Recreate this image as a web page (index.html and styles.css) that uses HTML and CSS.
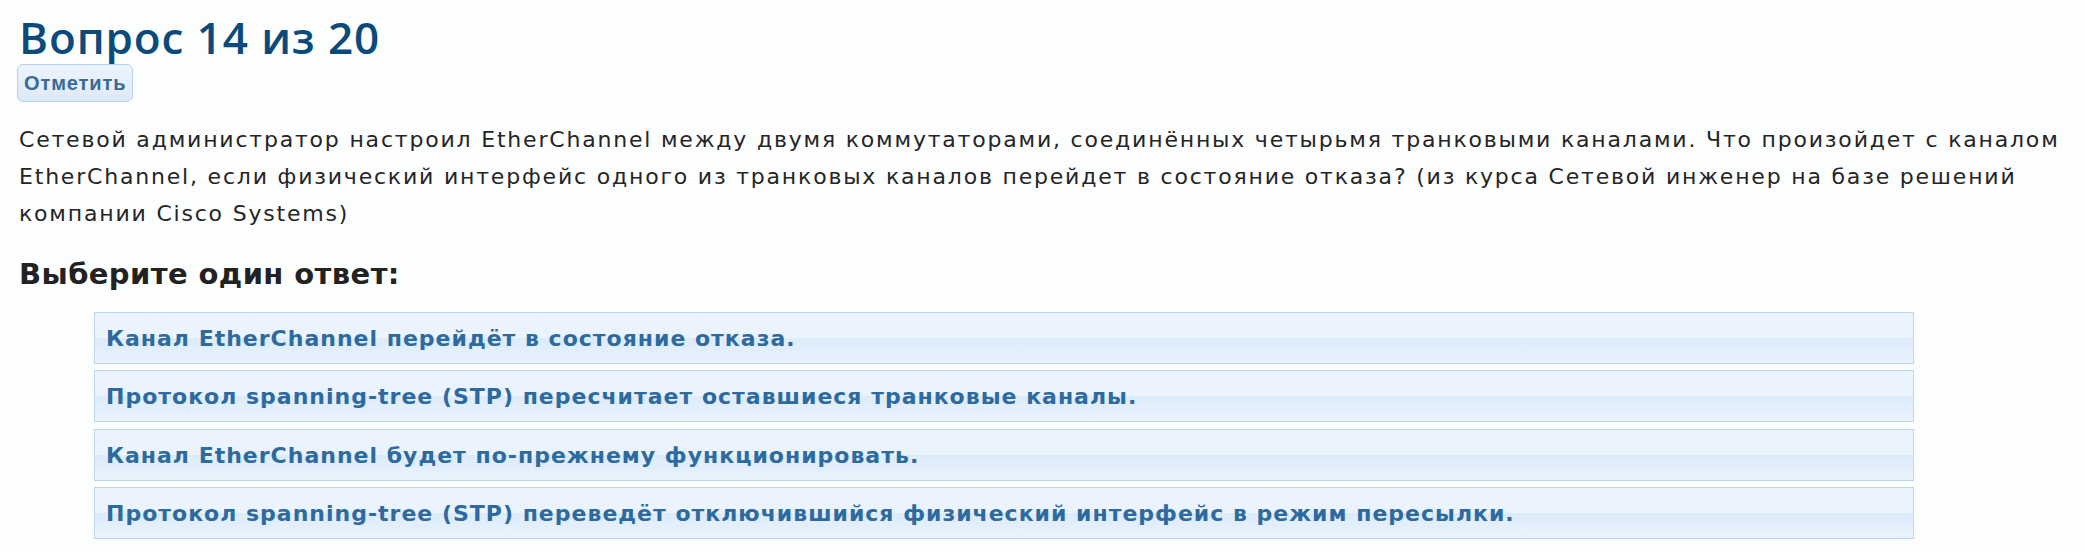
FILE: index.html
```html
<!DOCTYPE html>
<html lang="ru">
<head>
    <meta charset="UTF-8">
    <meta name="viewport" content="width=device-width, initial-scale=1.0">
    <title>Вопрос 14 из 20</title>
    <link rel="stylesheet" href="styles.css">
</head>
<body>
    <div class="question">
        <h1 class="q-title">Вопрос 14 из 20</h1>
        <button class="flag-btn" type="button">Отметить</button>
        <p class="q-text">Сетевой администратор настроил EtherChannel между двумя коммутаторами, соединённых четырьмя транковыми каналами. Что произойдет с каналом EtherChannel, если физический интерфейс одного из транковых каналов перейдет в состояние отказа? (из курса Сетевой инженер на базе решений компании Cisco Systems)</p>
        <h2 class="q-prompt">Выберите один ответ:</h2>
        <ul class="answers">
            <li class="answer">Канал EtherChannel перейдёт в состояние отказа.</li>
            <li class="answer">Протокол spanning-tree (STP) пересчитает оставшиеся транковые каналы.</li>
            <li class="answer">Канал EtherChannel будет по-прежнему функционировать.</li>
            <li class="answer">Протокол spanning-tree (STP) переведёт отключившийся физический интерфейс в режим пересылки.</li>
        </ul>
    </div>
</body>
</html>
```

FILE: styles.css
```css
body {
    margin: 0;
    padding: 0 20px 0 19px;
    background-color: #fcfdfd;
    font-family: "DejaVu Sans", "Open Sans", sans-serif;
    color: #222;
}
.q-title {
    margin: 0;
    padding-top: 10px;
    font-family: "Open Sans", "DejaVu Sans", sans-serif;
    font-size: 44px;
    font-weight: 600;
    letter-spacing: 0.9px;
    line-height: 54px;
    color: #0c4a7a;
}
.flag-btn {
    display: block;
    margin: 0 0 0 -2px;
    height: 38px;
    padding: 0 6px;
    border: 1px solid #b8d2ec;
    border-radius: 6px;
    background: linear-gradient(#ecf4fd, #dde9f7);
    font-family: "Liberation Sans", Arial, sans-serif;
    font-size: 20px;
    font-weight: bold;
    letter-spacing: 0.9px;
    color: #3b6a96;
}
.q-text {
    margin: 19px 0 0;
    font-size: 22px;
    letter-spacing: 1.8px;
    line-height: 37px;
    color: #252525;
}
.q-prompt {
    margin: 22px 0 0;
    font-size: 29px;
    font-weight: 700;
    letter-spacing: 0.4px;
    line-height: 40px;
    color: #222;
}
.answers {
    list-style: none;
    margin: 18px 0 0 75px;
    padding: 0;
    width: 1820px;
}
.answer {
    box-sizing: border-box;
    height: 52px;
    margin-bottom: 6.3px;
    padding: 1px 11px 0;
    border: 1px solid #bcd6ec;
    background: linear-gradient(#ebf4fe 0, #ebf4fe 50%, #dcebfa 50%, #e9f3fd 100%);
    font-size: 22px;
    font-weight: 700;
    letter-spacing: 1px;
    line-height: 49px;
    color: #2d6a9f;
}
```
